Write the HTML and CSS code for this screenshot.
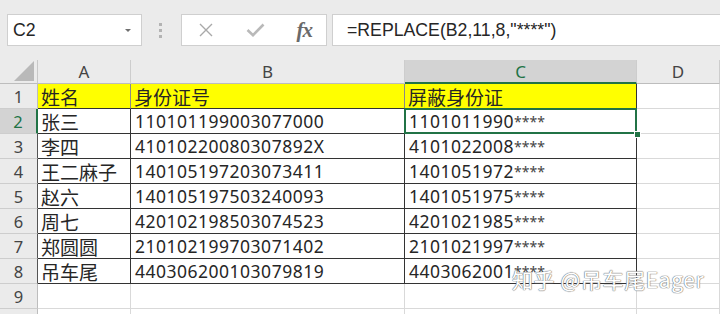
FILE: index.html
```html
<!DOCTYPE html>
<html lang="zh-CN">
  <head>
    <meta charset="UTF-8" />
    <meta name="viewport" content="width=device-width, initial-scale=1.0" />
    <title>屏蔽身份证 - REPLACE</title>
    <link rel="stylesheet" href="styles.css">
  </head>
  <body>
    <div class="formula-bar">
      <div class="name-box">
        <span>C2</span>
        <span class="drop"></span>
      </div>
      <div class="grip"><i></i><i></i><i></i></div>
      <div class="fx-box">
        <svg class="icon-x" width="16" height="14" viewBox="0 0 16 14">
          <path d="M2 1 L14 13 M14 1 L2 13" stroke="#a9a9a9" stroke-width="1.4" fill="none" />
        </svg>
        <svg class="icon-ok" width="19" height="14" viewBox="0 0 19 14">
          <path d="M1.5 7 L7 12.2 L17.5 1.5" stroke="#b9b9b9" stroke-width="2.6" fill="none" />
        </svg>
        <span class="fx">fx</span>
      </div>
      <div class="formula">=REPLACE(B2,11,8,"****")</div>
    </div>

    <div class="sheet">
      <!-- column headers -->
      <div class="corner">
        <svg width="20" height="20" viewBox="0 0 20 20">
          <polygon points="20,0 20,20 0,20" fill="#b9b9b9" />
        </svg>
      </div>
      <div class="col-head">A</div>
      <div class="col-head">B</div>
      <div class="col-head active">C</div>
      <div class="col-head">D</div>

      <!-- row 1 -->
      <div class="row-head">1</div>
      <div class="cell zh title">姓名</div>
      <div class="cell zh title">身份证号</div>
      <div class="cell zh title last">屏蔽身份证</div>
      <div class="cell"></div>

      <!-- row 2 -->
      <div class="row-head active">2</div>
      <div class="cell zh t">张三</div>
      <div class="cell t">110101199003077000</div>
      <div class="cell t sel">1101011990<span class="star">****</span></div>
      <div class="cell"></div>

      <div class="row-head edge">3</div>
      <div class="cell zh t">李四</div>
      <div class="cell t">41010220080307892X</div>
      <div class="cell t">4101022008<span class="star">****</span></div>
      <div class="cell"></div>

      <div class="row-head edge">4</div>
      <div class="cell zh t">王二麻子</div>
      <div class="cell t">140105197203073411</div>
      <div class="cell t">1401051972<span class="star">****</span></div>
      <div class="cell"></div>

      <div class="row-head edge">5</div>
      <div class="cell zh t">赵六</div>
      <div class="cell t">140105197503240093</div>
      <div class="cell t">1401051975<span class="star">****</span></div>
      <div class="cell"></div>

      <div class="row-head edge">6</div>
      <div class="cell zh t">周七</div>
      <div class="cell t">420102198503074523</div>
      <div class="cell t">4201021985<span class="star">****</span></div>
      <div class="cell"></div>

      <div class="row-head edge">7</div>
      <div class="cell zh t">郑圆圆</div>
      <div class="cell t">210102199703071402</div>
      <div class="cell t">2101021997<span class="star">****</span></div>
      <div class="cell"></div>

      <div class="row-head edge">8</div>
      <div class="cell zh t">吊车尾</div>
      <div class="cell t">440306200103079819</div>
      <div class="cell t">4403062001<span class="star">****</span></div>
      <div class="cell"></div>

      <div class="row-head">9</div>
      <div class="cell"></div>
      <div class="cell"></div>
      <div class="cell"></div>
      <div class="cell"></div>

      <div class="row-head"></div>
      <div class="cell"></div>
      <div class="cell"></div>
      <div class="cell"></div>
      <div class="cell"></div>
    </div>

    <div class="watermark">知乎 @吊车尾Eager</div>
  </body>
</html>
```

FILE: styles.css
```css
/* Excel-like sheet, formula bar on top */
body {
  margin: 0;
  height: 314px;
  overflow: hidden;
  background-color: #ebebeb;
  color: #262626;
  font-family: "Liberation Sans", "Noto Sans CJK SC", sans-serif;
}

.formula-bar {
  display: flex;
  align-items: flex-start;
  height: 60px;
  box-sizing: border-box;
  padding: 14px 0 0 7px;
}
.name-box,
.fx-box,
.formula {
  height: 32px;
  box-sizing: border-box;
  background-color: #fff;
  border: 1px solid #cfcfcf;
}
.name-box {
  width: 135px;
  display: flex;
  align-items: center;
  justify-content: space-between;
  padding: 1px 10px 0 5px;
  font-size: 17.7px;
}
.drop {
  width: 0;
  height: 0;
  border-left: 3px solid transparent;
  border-right: 3px solid transparent;
  border-top: 3px solid #6f6f6f;
}
.grip {
  display: flex;
  flex-direction: column;
  gap: 3px;
  margin: 9px 0 0 17px;
}
.grip i {
  width: 3px;
  height: 3px;
  background-color: #b3b3b3;
}
.fx-box {
  width: 146px;
  margin-left: 19px;
  display: flex;
  align-items: center;
  padding: 0 14px 0 16px;
}
.icon-ok {
  margin-left: 32px;
}
.fx {
  margin-left: auto;
  font-family: "Liberation Serif", serif;
  font-style: italic;
  font-weight: bold;
  font-size: 21px;
  color: #6a6a6a;
  letter-spacing: -1px;
}
.formula {
  flex: 1;
  margin: 0 -2px 0 5px;
  padding: 1px 0 0 14px;
  font-size: 17.7px;
  line-height: 29px;
}

.sheet {
  display: grid;
  grid-template-columns: 38px 93px 274px 232px 1fr;
  grid-template-rows: 24px;
  grid-auto-rows: 25px;
}
.sheet > div {
  box-sizing: border-box;
  border-right: 1px solid #d9d9d9;
  border-bottom: 1px solid #d9d9d9;
}
.corner {
  display: flex;
  align-items: flex-end;
  justify-content: flex-end;
  padding: 0 3px 2px 0;
  border-bottom-color: #bdbdbd !important;
  border-right-color: #c8c8c8 !important;
}
.col-head,
.row-head {
  background-color: #ebebeb;
  color: #444;
  font-family: "Noto Sans", sans-serif;
  text-align: center;
}
.col-head {
  font-size: 17px;
  line-height: 24px;
  border-right-color: #cdcdcd !important;
  border-bottom-color: #bdbdbd !important;
}
.row-head {
  font-size: 16.5px;
  line-height: 25px;
  border-right-color: #bdbdbd !important;
  border-bottom-color: #cdcdcd !important;
}
.col-head.active {
  background-color: #d3d3d3;
  color: #217346;
  border-bottom: 2px solid #217346 !important;
}
.row-head.active {
  background-color: #d3d3d3;
  color: #217346;
  border-right: 2px solid #217346 !important;
}
.row-head.edge {
  border-right-color: #555 !important;
}

.cell {
  background-color: #fff;
  padding: 1px 0 0 4px;
  font-family: "Noto Sans", sans-serif;
  font-size: 17.5px;
  letter-spacing: 0.5px;
  line-height: 23px;
  white-space: nowrap;
}
.cell.zh {
  font-family: "Noto Sans CJK SC", sans-serif;
  font-size: 19px;
  letter-spacing: 0;
  padding-left: 3px;
}
.cell.title {
  background-color: #ffff00;
  border-bottom-color: #333 !important;
  border-right-color: #8a8a8a !important;
}
.cell.title.last {
  border-right-color: #333 !important;
}
.cell.t {
  border-right-color: #333 !important;
  border-bottom-color: #333 !important;
}
.star {
  font-size: 14px;
  letter-spacing: 0;
  color: #444;
  vertical-align: 1px;
}

/* selected cell C2 */
.sel {
  position: relative;
}
.sel::after {
  content: "";
  position: absolute;
  left: -1px;
  top: -1px;
  right: -1px;
  bottom: -1px;
  border: 2px solid #217346;
}
.sel::before {
  content: "";
  position: absolute;
  right: -5px;
  bottom: -5px;
  width: 5px;
  height: 5px;
  background-color: #217346;
  border: 1px solid #fff;
  z-index: 1;
}

.watermark {
  position: absolute;
  left: 512px;
  top: 264px;
  font-family: "Noto Sans CJK SC", sans-serif;
  font-size: 21px;
  letter-spacing: 0.6px;
  color: #fff;
  text-shadow: 0 0 1px #7a7a7a, 0 0 1px #7a7a7a, 0 0 1px #7a7a7a;
}
```
